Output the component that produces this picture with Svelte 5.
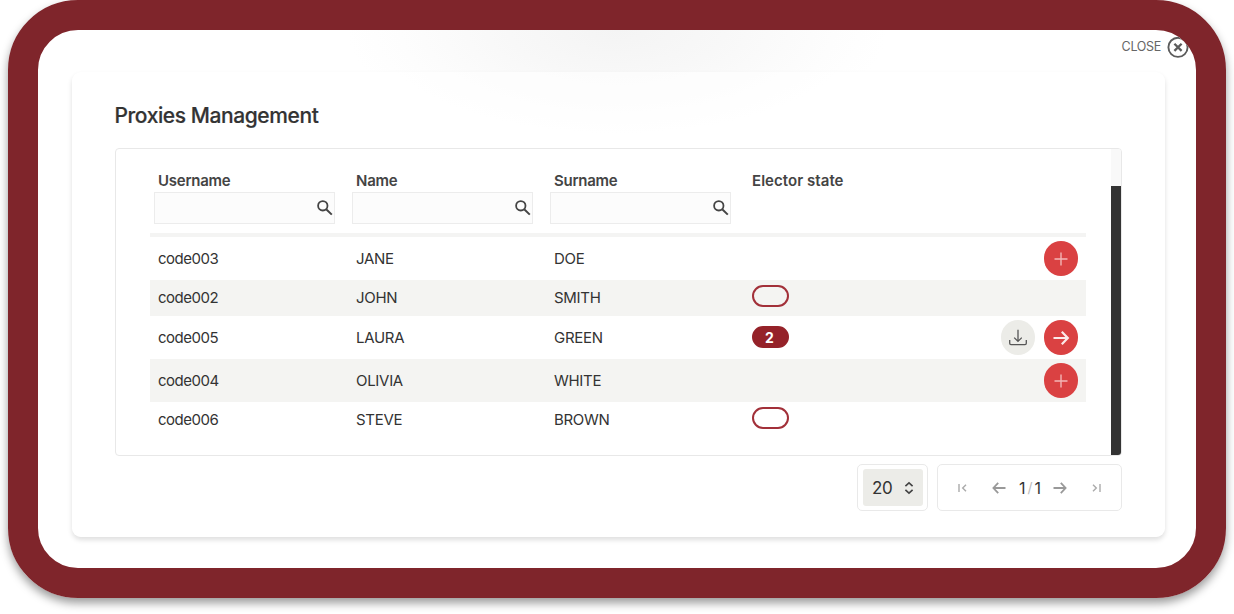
<script>
  const columns = ['Username', 'Name', 'Surname'];
  const voters = [
    { code: 'code003', name: 'JANE', surname: 'DOE', action: 'add' },
    { code: 'code002', name: 'JOHN', surname: 'SMITH', state: 'empty' },
    { code: 'code005', name: 'LAURA', surname: 'GREEN', state: 'count', count: 2, action: 'open' },
    { code: 'code004', name: 'OLIVIA', surname: 'WHITE', action: 'add' },
    { code: 'code006', name: 'STEVE', surname: 'BROWN', state: 'empty' }
  ];
</script>

<main class="frame">
  <div class="close">
    <span>CLOSE</span>
    <svg width="22" height="22" viewBox="0 0 22 22" fill="none" stroke="#5c5c5c">
      <circle cx="11" cy="11.3" r="9.6" stroke-width="1.9" />
      <path d="M7.4 7.7l7.2 7.2M14.6 7.7l-7.2 7.2" stroke-width="2.3" />
    </svg>
  </div>
  <section class="card">
    <h1>Proxies Management</h1>
    <div class="panel">
      <div class="table">
        <div class="head">
          {#each columns as label}
            <div class="filter">
              <span class="label">{label}</span>
              <div class="field">
                <svg width="16" height="16" viewBox="0 0 16 16" fill="none" stroke="#444">
                  <circle cx="5.8" cy="5.8" r="4.7" stroke-width="1.8" />
                  <path d="M9.2 9.2l5.6 5.4" stroke-width="2" />
                </svg>
              </div>
            </div>
          {/each}
          <div class="filter"><span class="label wide">Elector state</span></div>
        </div>
        {#each voters as voter}
          <div class="row" class:tall={voter.action}>
            <span class="code">{voter.code}</span>
            <span>{voter.name}</span>
            <span>{voter.surname}</span>
            <div class="status">
              {#if voter.state}
                <span class="pill" class:full={voter.state === 'count'}>{voter.count ?? ''}</span>
              {/if}
            </div>
            <div class="actions">
              {#if voter.action === 'open'}
                <span class="round light">
                  <svg width="20" height="18" viewBox="0 0 20 18" fill="none" stroke="#555" stroke-width="1.3">
                    <path d="M10 .8v11.4M6.2 8.6l3.8 3.8 3.8-3.8" />
                    <path d="M1.7 11v3.3q0 1.3 1.3 1.3h14q1.3 0 1.3-1.3V11" />
                  </svg>
                </span>
                <span class="round">
                  <svg width="18" height="18" viewBox="0 0 18 18" fill="none" stroke="#fbe9e9" stroke-width="2.2">
                    <path d="M1.5 9h14M9.8 2.8l6 6.2-6 6.2" />
                  </svg>
                </span>
              {:else if voter.action === 'add'}
                <span class="round">
                  <svg width="14" height="14" viewBox="0 0 14 14" stroke="#f3b6b6" stroke-width="1.4">
                    <path d="M7 .5v13M.5 7h13" />
                  </svg>
                </span>
              {/if}
            </div>
          </div>
        {/each}
      </div>
      <div class="scroll"><div class="thumb"></div></div>
    </div>
    <footer>
      <div class="size">
        <div class="select">
          <span>20</span>
          <svg width="10" height="14" viewBox="0 0 10 14" fill="none" stroke="#444" stroke-width="1.6">
            <path d="M1.4 5.2L5 1.8l3.6 3.4M1.4 8.8L5 12.2l3.6-3.4" />
          </svg>
        </div>
      </div>
      <div class="pager">
        <svg class="first" width="9" height="10" viewBox="0 0 9 10" fill="none" stroke="#aaa" stroke-width="1.4">
          <path d="M1 1v8M8 1.8L4.7 5 8 8.2" />
        </svg>
        <svg class="prev" width="14" height="12" viewBox="0 0 14 12" fill="none" stroke="#999" stroke-width="1.8">
          <path d="M6.2.8L1.4 6l4.8 5.2M1.4 6H13.5" />
        </svg>
        <span class="pages">1<i>/</i>1</span>
        <svg class="next" width="14" height="12" viewBox="0 0 14 12" fill="none" stroke="#999" stroke-width="1.8">
          <path d="M7.8.8L12.6 6l-4.8 5.2M12.6 6H.5" />
        </svg>
        <svg class="last" width="9" height="10" viewBox="0 0 9 10" fill="none" stroke="#aaa" stroke-width="1.4">
          <path d="M8 1v8M1 1.8L4.3 5 1 8.2" />
        </svg>
      </div>
    </footer>
  </section>
</main>

<style>
  :global(body) {
    margin: 0;
    min-height: 614px;
    background: #fff;
    font-family: Inter, 'Liberation Sans', sans-serif;
    color: #333;
  }
  :global(#app) {
    box-sizing: border-box;
    height: 614px;
    padding: 0 8px;
  }
  .frame {
    box-sizing: border-box;
    position: relative;
    height: 598px;
    padding: 42px 31px 0 33.5px;
    border: 30px solid #7f252b;
    border-radius: 70px;
    overflow: hidden;
    background: radial-gradient(ellipse 270px 115px at 50% 0, #f4f4f4 0, #f8f8f8 40%, #fdfdfd 80%, #fff 100%) padding-box;
    box-shadow: 0 5px 10px rgba(0, 0, 0, 0.4);
  }
  .close {
    position: absolute;
    top: 6px;
    right: 7px;
    display: flex;
    align-items: center;
    gap: 6px;
    font-size: 12.5px;
    color: #666;
    letter-spacing: -0.3px;
  }
  .close span {
    padding-bottom: 2px;
  }
  .card {
    box-sizing: border-box;
    height: 465px;
    padding: 28px 43px 0 43px;
    border-radius: 9px;
    background: rgba(255, 255, 255, 0.6);
    box-shadow: 0 3px 5px rgba(0, 0, 0, 0.13);
  }
  h1 {
    margin: 0;
    height: 48px;
    line-height: 32px;
    font-size: 21px;
    font-weight: 500;
    letter-spacing: -0.42px;
    -webkit-text-stroke: 0.2px #333;
  }
  .panel {
    box-sizing: border-box;
    display: flex;
    justify-content: space-between;
    height: 308px;
    padding-left: 34.5px;
    border: 1px solid #e8e8e8;
    border-radius: 4px;
    overflow: hidden;
    background: #fff;
  }
  .table {
    width: 936px;
  }
  .head {
    display: grid;
    grid-template-columns: repeat(4, 198px);
    box-sizing: border-box;
    height: 88px;
    padding-top: 22px;
    border-bottom: 4px solid #f4f4f3;
  }
  .filter {
    padding-left: 4px;
  }
  .label {
    display: block;
    height: 21px;
    padding-left: 4px;
    line-height: 20px;
    font-size: 15px;
    font-weight: 600;
    color: #444;
    letter-spacing: -0.25px;
    white-space: nowrap;
  }
  .label.wide {
    letter-spacing: 0.05px;
  }
  .field {
    box-sizing: border-box;
    display: flex;
    justify-content: flex-end;
    width: 181px;
    height: 32px;
    padding: 7px 1px 0 0;
    border: 1px solid #ececec;
    background: #fcfcfc;
  }
  .row {
    display: grid;
    grid-template-columns: 198px 198px 198px 150px 1fr;
    align-items: center;
    box-sizing: border-box;
    height: 36px;
    padding: 0 0 1px 8px;
    font-size: 15px;
    letter-spacing: -0.3px;
  }
  .row.tall {
    height: 43px;
    padding-bottom: 0;
  }
  .row:nth-child(odd) {
    background: #f4f4f2;
  }
  .row .code {
    letter-spacing: -0.5px;
  }
  .status {
    display: flex;
    padding-bottom: 4px;
  }
  .tall .status {
    padding-bottom: 1px;
  }
  .pill {
    box-sizing: border-box;
    width: 37px;
    height: 22px;
    border: 2px solid #a23039;
    border-radius: 11px;
    color: #fff;
    font-size: 14px;
    font-weight: 700;
    line-height: 19px;
    text-align: center;
    letter-spacing: 0;
    padding-right: 2px;
  }
  .pill.full {
    background: #952229;
    border-color: #952229;
  }
  .actions {
    display: flex;
    justify-content: flex-end;
    gap: 8.5px;
    padding: 0 8px 0 0;
  }
  .round {
    display: grid;
    place-items: center;
    width: 34.5px;
    height: 34.5px;
    border-radius: 50%;
    background: #da4142;
  }
  .round.light {
    background: #ecece8;
  }
  .scroll {
    box-sizing: border-box;
    width: 10.5px;
    padding-top: 37px;
    background: #f9f9f9;
  }
  .thumb {
    height: 269px;
    background: #333;
  }
  footer {
    display: flex;
    justify-content: flex-end;
    gap: 9px;
    padding-top: 8px;
  }
  .size,
  .pager {
    box-sizing: border-box;
    height: 47px;
    border: 1px solid #e9e9e9;
    border-radius: 5px;
    background: #fff;
  }
  .size {
    width: 71px;
    padding: 4px 4px 4px 5px;
  }
  .select {
    box-sizing: border-box;
    display: flex;
    align-items: center;
    justify-content: space-between;
    height: 37px;
    padding: 0 9px;
    border-radius: 3px;
    background: #ecece8;
    font-size: 17px;
    letter-spacing: -0.4px;
  }
  .pager {
    display: flex;
    align-items: center;
    width: 185px;
    padding-left: 20px;
    font-size: 16px;
  }
  .pages {
    display: flex;
    justify-content: space-between;
    width: 22px;
    margin: 0 12px 0 13px;
  }
  .pages i {
    color: #bbb;
    font-style: normal;
    font-size: 14px;
    line-height: 19px;
  }
  .prev {
    margin-left: 25px;
  }
  .last {
    margin-left: 25px;
  }
</style>
